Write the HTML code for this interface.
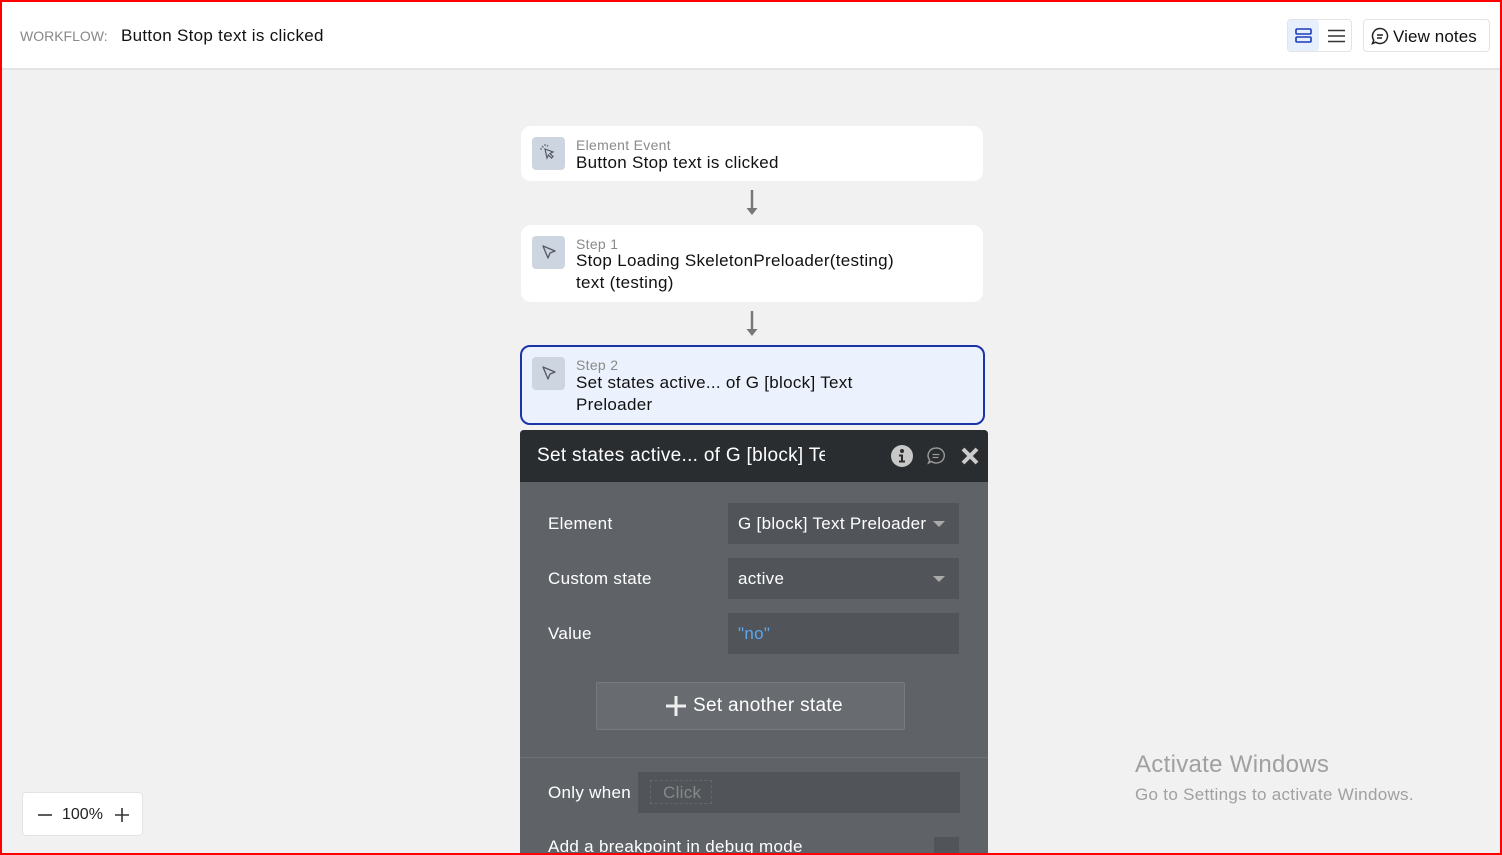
<!DOCTYPE html>
<html style="overflow:hidden;height:855px"><head><meta charset="utf-8"><style>
*{box-sizing:border-box;margin:0;padding:0}
body{width:1502px;height:855px;overflow:hidden;background:#f1f1f1;font-family:"Liberation Sans",sans-serif;position:relative;color:#1a1a1a;letter-spacing:0.3px}
.frame{position:absolute;left:0;top:0;width:1502px;height:855px;border:2px solid #f00;z-index:50;pointer-events:none}
.top{position:absolute;left:0;top:0;width:1502px;height:70px;background:#fff;border-bottom:2px solid #e4e4e4}
.card{position:absolute;left:521px;width:462px;background:#fff;border-radius:10px}
.ic{position:absolute;left:11px;top:11px;width:33px;height:33px;background:#cdd6e0;border-radius:4px}
.lab{position:absolute;left:55px;font-size:14px;color:#8a8a8a}
.tt{position:absolute;left:55px;font-size:17px;line-height:22px;color:#111}
.arrow{position:absolute;left:745px;width:14px}
.panel{position:absolute;left:520px;top:430px;width:468px;height:425px;background:#5f6367;border-radius:4px 4px 0 0;overflow:hidden}
.ph{height:52px;background:#292d30;color:#fff;font-size:19px;padding:15px 0 0 17px}
.row{position:absolute;left:28px;color:#fff;font-size:17px}
.box{position:absolute;left:208px;width:231px;height:41px;background:#515559;color:#fff;font-size:17px;padding:11px 0 0 10px}
.dd{position:absolute;right:14px;top:18px;border-left:6px solid transparent;border-right:6px solid transparent;border-top:6px solid #aaa}
</style></head><body>
<div class="frame"></div>
<div class="top">
 <span style="position:absolute;left:20px;top:28px;font-size:14px;color:#888;letter-spacing:0">WORKFLOW:</span>
 <span style="position:absolute;left:121px;top:26px;font-size:17px;color:#111">Button Stop text is clicked</span>
 <div style="position:absolute;left:1287px;top:19px;width:65px;height:33px;border:1px solid #e3e3e3;border-radius:4px;background:#fff">
  <div style="position:absolute;left:0;top:0;width:31px;height:31px;background:#e8effc;border-radius:3px"></div>
  <svg style="position:absolute;left:7px;top:8px" width="17" height="15"><rect x="1" y="1" width="15" height="5" rx="1" fill="none" stroke="#1b3cb8" stroke-width="1.6"/><rect x="1" y="9" width="15" height="5" rx="1" fill="none" stroke="#1b3cb8" stroke-width="1.6"/></svg>
  <svg style="position:absolute;left:40px;top:9px" width="17" height="14"><path d="M0 1.5H17M0 7H17M0 12.5H17" stroke="#333" stroke-width="1.6"/></svg>
 </div>
 <div style="position:absolute;left:1363px;top:19px;width:127px;height:33px;border:1px solid #e3e3e3;border-radius:4px;background:#fff">
  <svg style="position:absolute;left:7px;top:7px" width="18" height="18"><path d="M9 1.5a7.5 7.5 0 1 1-4.2 13.7L1.5 16.5l1.3-3.3A7.5 7.5 0 0 1 9 1.5z" fill="none" stroke="#222" stroke-width="1.5"/><path d="M6 8h6M6 11h5" stroke="#222" stroke-width="1.4"/></svg>
  <span style="position:absolute;left:29px;top:7px;font-size:17px;color:#111;letter-spacing:0.1px">View notes</span>
 </div>
</div>

<div class="card" style="top:126px;height:55px">
 <div class="ic"><svg width="33" height="33"><path d="M13 12l8 3-3 1.5 3 3-1.5 1.5-3-3L15 21z" fill="none" stroke="#556" stroke-width="1.2"/><path d="M10 9l1.5 1.5M13 7v2M8 12h2M16 8l-1 1.5" stroke="#556" stroke-width="1"/></svg></div>
 <span class="lab" style="top:11px">Element Event</span>
 <span class="tt" style="top:26px">Button Stop text is clicked</span>
</div>
<svg class="arrow" style="top:190px" width="14" height="26"><path d="M7 0V22" stroke="#777" stroke-width="2.4"/><path d="M1.5 18l5.5 7 5.5-7z" fill="#777"/></svg>
<div class="card" style="top:225px;height:77px">
 <div class="ic"><svg width="33" height="33"><path d="M11 10l12 5-5 2-2 5z" fill="none" stroke="#556" stroke-width="1.3" stroke-linejoin="round"/></svg></div>
 <span class="lab" style="top:11px">Step 1</span>
 <span class="tt" style="top:25px">Stop Loading SkeletonPreloader(testing)<br>text (testing)</span>
</div>
<svg class="arrow" style="top:311px" width="14" height="26"><path d="M7 0V22" stroke="#777" stroke-width="2.4"/><path d="M1.5 18l5.5 7 5.5-7z" fill="#777"/></svg>
<div class="card" style="top:345px;left:520px;width:465px;height:80px;background:#ebf2fd;border:2px solid #1b34a8">
 <div class="ic" style="left:10px;top:10px"><svg width="33" height="33"><path d="M11 10l12 5-5 2-2 5z" fill="none" stroke="#556" stroke-width="1.3" stroke-linejoin="round"/></svg></div>
 <span class="lab" style="top:10px;left:54px">Step 2</span>
 <span class="tt" style="top:25px;left:54px">Set states active... of G [block] Text<br>Preloader</span>
</div>

<div class="panel">
 <div class="ph"><span style="display:inline-block;width:288px;overflow:hidden;white-space:nowrap;vertical-align:top">Set states active... of G [block] Text Preloader</span></div>
 <svg style="position:absolute;left:371px;top:15px" width="22" height="22"><circle cx="11" cy="11" r="11" fill="#c8c8c8"/><circle cx="11" cy="6" r="2" fill="#292d30"/><path d="M8 9.5h4v6h2v2H8v-2h2v-4H8z" fill="#292d30"/></svg>
 <svg style="position:absolute;left:406px;top:16px" width="20" height="20"><path d="M10 2a8 7.5 0 1 1-4.5 13.5L2.5 17l1.2-3A8 7.5 0 0 1 10 2z" fill="none" stroke="#999" stroke-width="1.4"/><path d="M6.5 8.5h7M6.5 11.5h6" stroke="#999" stroke-width="1.3"/></svg>
 <svg style="position:absolute;left:441px;top:17px" width="18" height="18"><path d="M2 2L16 16M16 2L2 16" stroke="#ccc" stroke-width="4"/></svg>
 <span class="row" style="top:84px">Element</span>
 <div class="box" style="top:73px">G [block] Text Preloader<div class="dd"></div></div>
 <span class="row" style="top:139px">Custom state</span>
 <div class="box" style="top:128px">active<div class="dd"></div></div>
 <span class="row" style="top:194px">Value</span>
 <div class="box" style="top:183px;color:#5aa7f0">"no"</div>
 <div style="position:absolute;left:76px;top:252px;width:309px;height:48px;background:#686c70;border:1px solid #777b7f;border-radius:2px;color:#fff;font-size:19px;padding:12px 0 0 69px">
  <svg style="position:absolute;left:69px;top:13px" width="20" height="20"><path d="M10 0V20M0 10H20" stroke="#eee" stroke-width="3"/></svg>
  <span style="margin-left:27px">Set another state</span></div>
 <div style="position:absolute;left:0;top:327px;width:468px;height:1px;background:#6d7175"></div>
 <span class="row" style="top:353px">Only when</span>
 <div style="position:absolute;left:118px;top:342px;width:322px;height:41px;background:#515559">
  <span style="position:absolute;left:12px;top:8px;width:62px;height:24px;border:1px dashed #666;color:#888;font-size:17px;padding:2px 0 0 12px">Click</span></div>
 <span class="row" style="top:407px">Add a breakpoint in debug mode</span>
 <div style="position:absolute;left:414px;top:407px;width:25px;height:25px;background:#515559"></div>
</div>

<div style="position:absolute;left:1135px;top:751px;color:#a0a0a0;font-size:24px">Activate Windows</div>
<div style="position:absolute;left:1135px;top:785px;color:#a0a0a0;font-size:17px">Go to Settings to activate Windows.</div>

<div style="position:absolute;left:22px;top:792px;width:121px;height:44px;background:#fff;border:1px solid #e3e3e3;border-radius:4px">
 <svg style="position:absolute;left:15px;top:21px" width="14" height="2"><path d="M0 1H14" stroke="#333" stroke-width="1.6"/></svg>
 <span style="position:absolute;left:39px;top:13px;font-size:16px;color:#222;letter-spacing:0">100%</span>
 <svg style="position:absolute;left:92px;top:15px" width="14" height="14"><path d="M7 0V14M0 7H14" stroke="#333" stroke-width="1.6"/></svg>
</div>
</body></html>
